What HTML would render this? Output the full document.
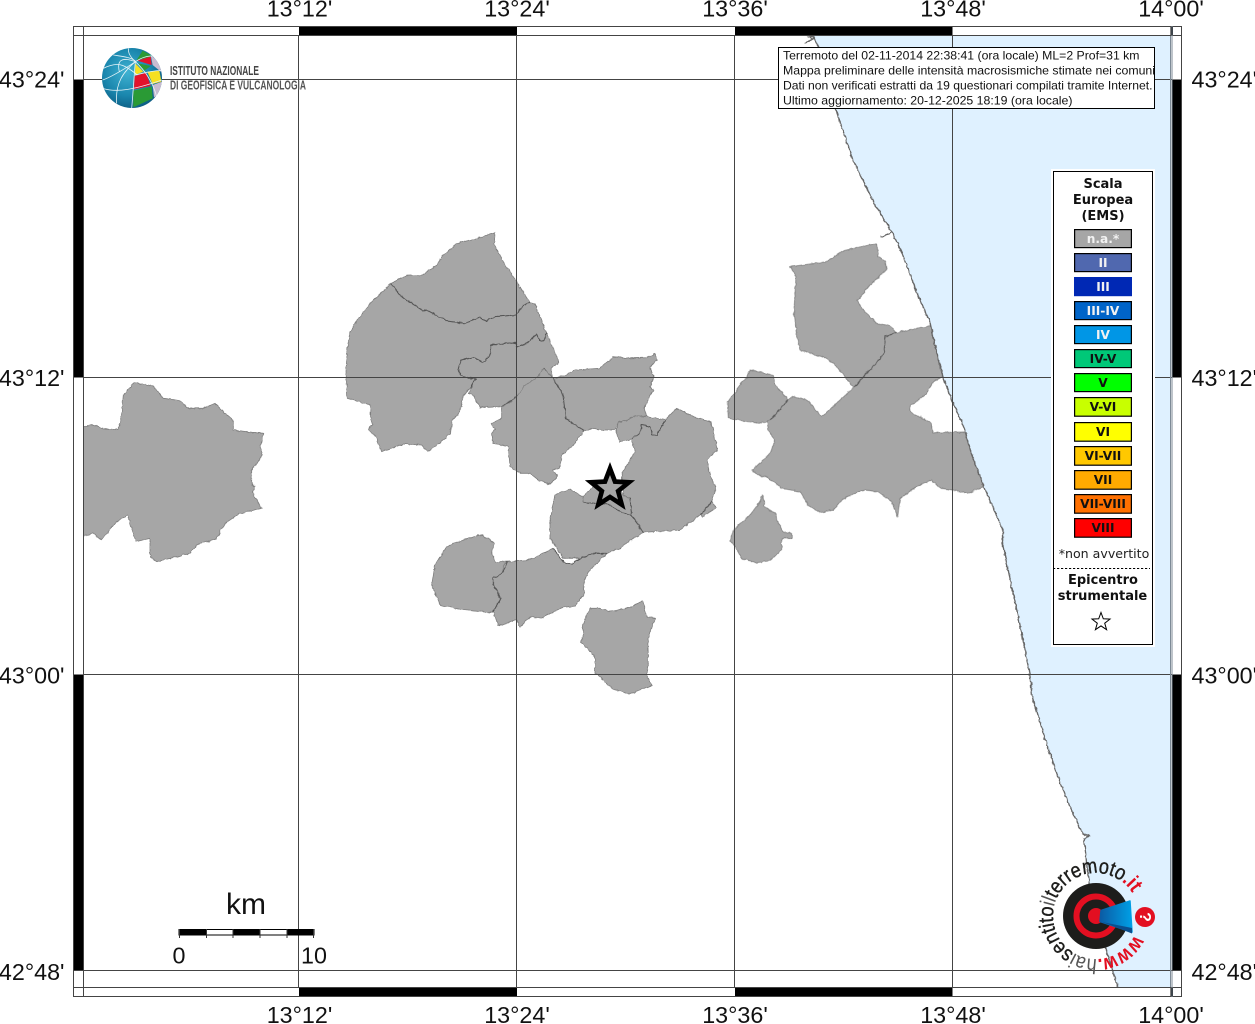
<!DOCTYPE html>
<html lang="it">
<head>
<meta charset="utf-8">
<title>Mappa intensità macrosismiche</title>
<style>
html,body{margin:0;padding:0;background:#fff;width:1255px;height:1024px;overflow:hidden}
svg{display:block;position:absolute;left:0;top:0}
.t{font-family:"Liberation Sans",sans-serif;font-size:23.3px;fill:#111}
.b{font-family:"Liberation Sans",sans-serif;font-size:12px;fill:#111}
.d{font-family:"DejaVu Sans",sans-serif;font-size:13px;font-weight:bold;fill:#111;text-anchor:middle}
.s{font-family:"DejaVu Sans",sans-serif;font-size:12.2px;font-weight:bold;text-anchor:middle}
.g polygon{fill:#a6a6a6;stroke:#7e7e7e;stroke-width:2.4;stroke-linejoin:round}
.g polyline{fill:none;stroke:#555;stroke-width:3;stroke-linejoin:round}
.grid line{stroke:#444;stroke-width:1}
</style>
</head>
<body>
<svg width="1255" height="1024" viewBox="0 0 1255 1024" xmlns="http://www.w3.org/2000/svg">
<defs>
<radialGradient id="gl" cx="42%" cy="40%" r="65%"><stop offset="0" stop-color="#3fb2d2"/><stop offset=".6" stop-color="#1a86ad"/><stop offset="1" stop-color="#0c5a80"/></radialGradient>
<linearGradient id="wd" x1="0" y1="0" x2="1" y2="0"><stop offset="0" stop-color="#0b5ba4"/><stop offset="1" stop-color="#00a0e6"/></linearGradient>
<clipPath id="gc"><circle cx="216" cy="234" r="90"/></clipPath>
<clipPath id="hc"><rect x="779" y="48" width="375.5" height="60"/></clipPath>
<clipPath id="fr"><rect x="83.5" y="36" width="1087.5" height="952"/></clipPath>
<filter id="rough" filterUnits="userSpaceOnUse" x="0" y="0" width="1255" height="1024">
<feTurbulence type="fractalNoise" baseFrequency=".22" numOctaves="2" seed="4" result="n"/>
<feDisplacementMap in="SourceGraphic" in2="n" scale="3" xChannelSelector="R" yChannelSelector="G"/>
<feGaussianBlur stdDeviation=".35"/>
</filter>
<path id="ring" d="M1134.6 934.9A43 43 0 1 1 1131.2 891.3A43 43 0 0 1 1134.6 934.9"/>
</defs>

<!-- sea -->
<polygon fill="#dff1ff" points="813,36 820,50 837,113 853,160 863,180 875,205 892,232 902,253 917,293 930,323 937,353 943,377 953,403 965,430 970,450 983,485 1003,530 1003,546 1017,611 1025,650 1030,676 1032,696 1047,745 1057,774 1070,807 1083,834 1089,836 1084,838 1088,876 1093,910 1107,953 1118,988 1171,988 1171,36"/>

<g clip-path="url(#fr)">
<g filter="url(#rough)">
<!-- municipalities -->
<g class="g" transform="translate(70,370) scale(.33333)">
<polygon points="-60,172 40,172 65,165 100,175 145,180 155,130 160,75 192,38 250,48 280,85 330,92 355,115 400,115 435,100 460,125 490,150 490,180 545,187 580,190 570,235 578,255 545,300 545,345 555,350 548,370 575,415 510,430 465,460 440,505 380,525 360,550 300,565 260,575 240,560 240,505 198,515 172,435 135,460 95,510 70,490 40,498 -60,498"/>
</g>
<g class="g" transform="translate(340,225) scale(.33333)">
<polygon points="152,175 120,208 92,235 70,260 45,295 30,320 22,370 18,440 22,520 92,540 90,575 98,600 84,612 110,640 125,680 190,657 245,660 262,680 300,655 330,625 335,590 360,560 370,510 390,490 408,460 385,458 360,450 355,430 365,405 400,397 430,412 452,385 452,360 525,352 532,367 560,355 590,328 600,348 612,345 620,325 610,300 585,235 570,232 550,240 528,270 465,275 440,288 420,278 376,295 320,288 260,255 250,258 200,225 180,210"/>
<polygon points="152,175 200,152 245,150 290,122 310,90 350,55 405,42 465,22 463,60 490,110 530,170 570,232 550,240 528,270 465,275 440,288 420,278 376,295 320,288 260,255 250,258 200,225 180,210"/>
<polygon points="385,458 360,450 355,430 365,405 400,397 430,412 452,385 452,360 525,352 532,367 560,355 590,328 600,348 612,345 620,325 638,365 657,412 635,428 635,458 612,430 605,450 565,475 530,515 485,545 420,548 395,505 385,505 408,460"/>
<polyline points="152,175 180,210 200,225 250,258 260,255 320,288 376,295 420,278 440,288 465,275 528,270 550,240 570,232"/>
<polyline points="408,460 385,458 360,450 355,430 365,405 400,397 430,412 452,385 452,360 525,352 532,367 560,355 590,328 600,348 612,345 620,325"/>
<polyline points="408,460 390,490"/>
<polyline points="485,545 530,515 565,475 605,450 612,430 635,458"/>
</g>
<g class="g" transform="translate(480,345) scale(.33333)">
<polygon points="222,100 250,92 285,75 360,70 400,35 445,40 500,38 525,25 530,45 510,68 522,98 510,125 522,135 510,150 493,190 500,215 462,212 440,228 415,232 405,255 370,255 340,250 312,258 258,220 248,145"/>
<polygon points="65,187 108,160 135,120 175,95 190,70 215,95 248,145 258,220 312,258 280,300 245,330 240,370 218,375 232,395 210,418 175,405 150,385 120,385 90,365 85,305 40,295 35,265 45,255 35,235 65,220"/>
<polygon points="500,215 555,225 530,270 515,268 510,245 485,240 478,265 455,283 420,290 408,265 415,232 440,228 462,212"/>
<polygon points="590,190 640,215 695,232 700,260 712,315 680,345 690,390 708,430 695,470 660,510 600,555 490,562 472,530 455,515 450,460 430,450 425,385 465,322 455,283 478,265 485,240 510,245 515,268 530,270 555,225"/>
<polygon points="660,510 695,470 710,488 668,515"/>
<polygon points="308,455 345,420 400,410 430,450 450,460 455,512 420,500 385,478 345,475 312,472"/>
<polygon points="210,520 225,450 268,432 308,455 312,472 345,475 385,478 420,500 455,512 490,562 445,590 420,610 380,625 300,640 250,640 210,580"/>
<polyline points="215,95 248,145 258,220 312,258"/>
<polyline points="455,283 478,265 485,240 510,245 515,268 530,270 555,225"/>
<polyline points="312,472 345,475 385,478 420,500 455,512 490,562"/>
<polyline points="450,460 455,512"/>
<polyline points="660,510 695,470"/>
</g>
<g class="g" transform="translate(420,520) scale(.33333)">
<polygon points="262,125 225,125 215,105 222,70 205,55 180,45 115,65 80,80 45,135 35,195 60,255 130,270 218,278 243,235 220,195 220,175 250,155"/>
<polygon points="250,135 262,125 325,120 400,85 430,125 455,135 465,122 520,100 560,100 510,150 493,180 490,225 465,258 430,262 360,295 330,290 300,320 290,300 235,318 222,280 218,275 243,235 222,200 220,175 250,155"/>
<polygon points="508,265 540,265 570,275 630,262 668,242 680,290 708,295 695,320 682,370 685,440 680,465 695,497 625,522 575,505 540,470 525,460 525,410 482,365 490,345 488,320"/>
<polyline points="262,125 250,155 220,175 220,195 243,235 218,278"/>
<polyline points="400,85 430,125 455,135 465,122 520,100 560,100"/>
</g>
<g class="g" transform="translate(720,230) scale(.33333)">
<polygon points="210,110 320,95 370,62 470,40 475,80 495,92 500,118 450,165 412,212 430,240 470,280 510,287 528,308 495,318 490,375 402,472 340,400 320,385 240,360 230,320 225,270 222,240 228,140"/>
<polygon points="530,308 620,290 632,285 640,320 668,440 640,455 620,490 570,530 572,548 630,575 640,608 735,606 750,660 792,768 745,790 700,780 660,775 635,750 590,770 540,805 533,860 515,815 475,785 435,780 400,790 360,815 340,840 300,848 265,825 240,785 185,775 140,740 125,740 95,722 150,670 165,635 145,600 142,575 205,508 220,498 262,510 305,560 402,472 490,375 495,318"/>
<polygon points="90,420 135,430 160,435 165,465 205,508 150,572 115,580 25,565 22,515 45,490 65,455 80,445"/>
<polygon points="127,793 135,830 168,852 170,870 190,905 215,910 215,925 185,925 185,960 150,992 110,998 65,985 40,940 28,935 40,900 90,855 120,815"/>
<polyline points="528,308 495,318 490,375 402,472"/>
<polyline points="205,508 150,572"/>
</g>
</g>
<!-- coast -->
<g filter="url(#rough)">
<polyline fill="none" stroke="#666" stroke-width="1.3" points="805,43 813,39 809,37 813,36 820,50 837,113 853,160 863,180 875,205 892,232 902,253 917,293 930,323 937,353 943,377 953,403 965,430 970,450 983,485 1003,530 1003,546 1017,611 1025,650 1030,676 1032,696 1047,745 1057,774 1070,807 1083,834 1089,836 1084,838 1088,876 1093,910 1107,953 1118,988"/>
<polyline fill="none" stroke="#666" stroke-width="1.3" points="881,237 888,234 892,232"/>
</g>
</g>

<!-- grid -->
<g class="grid">
<line x1="298.5" y1="36" x2="298.5" y2="988"/><line x1="516.5" y1="36" x2="516.5" y2="988"/><line x1="734.5" y1="36" x2="734.5" y2="988"/><line x1="952.5" y1="36" x2="952.5" y2="988"/>
<line x1="83" y1="79.5" x2="1172" y2="79.5"/><line x1="83" y1="377.5" x2="1172" y2="377.5"/><line x1="83" y1="674.5" x2="1172" y2="674.5"/><line x1="83" y1="970.5" x2="1172" y2="970.5"/>
<line x1="1170.5" y1="36" x2="1170.5" y2="988" style="stroke:#7d8a96"/>
</g>

<!-- frame bars -->
<g fill="#000">
<rect x="299" y="26" width="218" height="10"/><rect x="735" y="26" width="217.5" height="10"/><rect x="1170.5" y="26" width="2.5" height="10"/>
<rect x="299" y="987.5" width="218" height="9.5"/><rect x="735" y="987.5" width="217.5" height="9.5"/><rect x="1170.5" y="987.5" width="2.5" height="9.5"/>
<rect x="73" y="79.5" width="10.5" height="298"/><rect x="73" y="674.5" width="10.5" height="296"/>
<rect x="1172.5" y="79.5" width="9.5" height="298"/><rect x="1172.5" y="674.5" width="9.5" height="296"/>
</g>
<g fill="none" stroke="#444" stroke-width="1">
<rect x="73.5" y="26.5" width="1108" height="970"/>
<line x1="73" y1="35.5" x2="1182" y2="35.5"/><line x1="73" y1="987.5" x2="1182" y2="987.5"/>
<line x1="83.5" y1="26" x2="83.5" y2="997"/><line x1="1172" y1="26" x2="1172" y2="997" style="stroke:#7d8a96"/>
<line x1="73" y1="970.5" x2="83" y2="970.5"/><line x1="1172" y1="970.5" x2="1182" y2="970.5"/>
</g>

<!-- tick labels -->
<g class="t" text-anchor="middle">
<text x="299.5" y="16.5">13°12'</text><text x="517" y="16.5">13°24'</text><text x="735" y="16.5">13°36'</text><text x="953" y="16.5">13°48'</text><text x="1171" y="16.5">14°00'</text>
<text x="299.5" y="1023">13°12'</text><text x="517" y="1023">13°24'</text><text x="735" y="1023">13°36'</text><text x="953" y="1023">13°48'</text><text x="1171" y="1023">14°00'</text>
</g>
<g class="t" text-anchor="end">
<text x="64.5" y="87.5">43°24'</text><text x="64.5" y="386">43°12'</text><text x="64.5" y="683.5">43°00'</text><text x="64.5" y="980">42°48'</text>
</g>
<g class="t">
<text x="1191.5" y="87.5">43°24'</text><text x="1191.5" y="386">43°12'</text><text x="1191.5" y="683.5">43°00'</text><text x="1191.5" y="980">42°48'</text>
</g>

<!-- main star -->
<polygon points="610,468.5 615,481.6 629,482.3 618.1,491.1 621.8,504.7 610,497 598.2,504.7 601.9,491.1 591,482.3 605,481.6" fill="#a6a6a6" stroke="#000" stroke-width="4.6" stroke-miterlimit="10"/>

<!-- header box -->
<rect x="778.5" y="47.5" width="376" height="61" fill="#fff" stroke="#000"/>
<g class="b" clip-path="url(#hc)">
<text x="783" y="59.5" textLength="356.5" lengthAdjust="spacingAndGlyphs">Terremoto del 02-11-2014 22:38:41 (ora locale) ML=2 Prof=31 km</text>
<text x="783" y="74.5" textLength="372" lengthAdjust="spacingAndGlyphs">Mappa preliminare delle intensità macrosismiche stimate nei comuni</text>
<text x="783" y="89.5" textLength="369.5" lengthAdjust="spacingAndGlyphs">Dati non verificati estratti da 19 questionari compilati tramite Internet.</text>
<text x="783" y="104.5" textLength="289.5" lengthAdjust="spacingAndGlyphs">Ultimo aggiornamento: 20-12-2025 18:19 (ora locale)</text>
</g>

<!-- legend -->
<rect x="1051" y="169" width="104" height="478" fill="#fff"/>
<rect x="1053.5" y="171.5" width="99" height="473" fill="#fff" stroke="#000"/>
<text class="d" x="1103" y="188">Scala</text>
<text class="d" x="1103" y="204">Europea</text>
<text class="d" x="1103" y="220">(EMS)</text>
<g stroke="#000" stroke-width="1.2">
<rect x="1074.6" y="229.6" width="56.8" height="18" fill="#a6a6a6"/>
<rect x="1074.6" y="253.6" width="56.8" height="18" fill="#5068af"/>
<rect x="1074.6" y="277.6" width="56.8" height="18" fill="#0028b4" stroke="#0028b4"/>
<rect x="1074.6" y="301.6" width="56.8" height="18" fill="#0064c8"/>
<rect x="1074.6" y="325.6" width="56.8" height="18" fill="#0096e6"/>
<rect x="1074.6" y="349.6" width="56.8" height="18" fill="#00c878"/>
<rect x="1074.6" y="373.6" width="56.8" height="18" fill="#00ff00"/>
<rect x="1074.6" y="397.6" width="56.8" height="18.6" fill="#c8ff00"/>
<rect x="1074.6" y="422.6" width="56.8" height="18.6" fill="#ffff00"/>
<rect x="1074.6" y="446.6" width="56.8" height="18.6" fill="#ffc800"/>
<rect x="1074.6" y="470.6" width="56.8" height="18.6" fill="#ffaa00"/>
<rect x="1074.6" y="494.6" width="56.8" height="18.6" fill="#ff7000"/>
<rect x="1074.6" y="518.6" width="56.8" height="18.6" fill="#ff0000"/>
</g>
<g class="s" fill="#f2f2f2">
<text x="1103" y="243">n.a.*</text><text x="1103" y="267">II</text><text x="1103" y="291">III</text><text x="1103" y="315">III-IV</text><text x="1103" y="339">IV</text>
</g>
<g class="s" fill="#111">
<text x="1103" y="363">IV-V</text><text x="1103" y="387">V</text><text x="1103" y="411">V-VI</text><text x="1103" y="436">VI</text><text x="1103" y="460">VI-VII</text><text x="1103" y="484">VII</text><text x="1103" y="508">VII-VIII</text><text x="1103" y="532">VIII</text>
</g>
<text x="1104" y="558" text-anchor="middle" style="font-family:'DejaVu Sans',sans-serif;font-size:12.6px;fill:#222">*non avvertito</text>
<line x1="1053" y1="568.5" x2="1150" y2="568.5" stroke="#000" stroke-dasharray="2.2 1.8"/>
<text class="d" x="1103" y="584">Epicentro</text>
<text class="d" x="1102.5" y="600">strumentale</text>
<polygon points="1101,612.5 1103.3,618.8 1110,619.1 1104.7,623.2 1106.6,629.7 1101,625.9 1095.4,629.7 1097.3,623.2 1092,619.1 1098.7,618.8" fill="#fff" stroke="#000" stroke-width="1"/>

<!-- scale bar -->
<text x="246" y="914" text-anchor="middle" style="font-family:'Liberation Sans',sans-serif;font-size:30px;fill:#111">km</text>
<rect x="179" y="929.5" width="135" height="5.5" fill="#fff" stroke="#000" stroke-width="1"/>
<g fill="#000"><rect x="179" y="929.3" width="28" height="6"/><rect x="233" y="929.3" width="27" height="6"/><rect x="287" y="929.3" width="27" height="6"/></g>
<g stroke="#333" stroke-width="1"><line x1="179.5" y1="929" x2="179.5" y2="938"/><line x1="206.5" y1="929" x2="206.5" y2="938"/><line x1="233" y1="929" x2="233" y2="938"/><line x1="260" y1="929" x2="260" y2="938"/><line x1="287" y1="929" x2="287" y2="938"/><line x1="313.5" y1="929" x2="313.5" y2="938"/></g>
<text class="t" x="179" y="963.3" text-anchor="middle">0</text>
<text class="t" x="314" y="963.3" text-anchor="middle">10</text>

<!-- INGV logo -->
<g transform="translate(60,0) scale(.33333)">
<circle cx="216" cy="234" r="90" fill="url(#gl)"/>
<g clip-path="url(#gc)">
<polygon points="230,180 248,152 272,165 272,172" fill="#2a9a35"/>
<polygon points="232,182 272,170 275,195" fill="#e2122b"/>
<polygon points="272,165 295,185 306,218 278,195" fill="#c8bcd0"/>
<polygon points="226,190 250,215 225,225" fill="#f5e020"/>
<polygon points="235,190 272,198 252,213" fill="#2a9a35"/>
<polygon points="262,215 298,212 304,245 278,252" fill="#f5e020"/>
<polygon points="224,228 258,218 272,258 222,268" fill="#e2122b"/>
<polygon points="278,255 306,245 302,280 282,292" fill="#c8bcd0"/>
<polygon points="220,272 275,260 278,295 220,322" fill="#2a9a35"/>
<g fill="none" stroke="#e8f4f8" stroke-width="2.4">
<path d="M226 185C190 210 145 235 128 240"/>
<path d="M226 185C205 165 205 155 205 145"/>
<path d="M226 185C185 170 170 180 178 215"/>
<path d="M226 185C190 215 165 250 170 310"/>
<path d="M226 185C222 230 220 270 215 325"/>
<path d="M226 185C255 210 280 250 290 290"/>
<path d="M226 185C250 170 270 165 285 170"/>
<path d="M130 205C170 185 190 190 232 225"/>
<path d="M128 265C170 278 220 270 306 240"/>
<path d="M160 165C190 170 215 172 228 185"/>
<path d="M225 225C250 220 280 210 304 212"/>
</g>
</g>
<text x="330" y="225" textLength="267" lengthAdjust="spacingAndGlyphs" style="font-family:'Liberation Sans',sans-serif;font-size:39px;font-weight:bold;fill:#444">ISTITUTO NAZIONALE</text>
<text x="330" y="268" textLength="408" lengthAdjust="spacingAndGlyphs" style="font-family:'Liberation Sans',sans-serif;font-size:39px;font-weight:bold;fill:#555">DI GEOFISICA E VULCANOLOGIA</text>
</g>

<!-- haisentito logo -->
<circle cx="1096" cy="916" r="33" fill="#1d1d1b"/>
<circle cx="1096" cy="916" r="19.5" fill="none" stroke="#e30f21" stroke-width="6" stroke-dasharray="105.5 17" stroke-dashoffset="-8.5"/>
<circle cx="1096" cy="916" r="8" fill="#e30f21"/>
<polygon points="1101,910.5 1130,901 1132,932 1100,921.5" fill="url(#wd)" stroke="url(#wd)" stroke-width="1.5" stroke-linejoin="round"/>
<polygon points="1102,922 1132,928 1132,933.5" fill="#0a4f8f"/>
<circle cx="1145" cy="917" r="10" fill="#e30f21"/>
<text transform="translate(1140,917) rotate(90)" text-anchor="middle" y="0" style="font-family:'Liberation Sans',sans-serif;font-size:16px;font-weight:bold;fill:#fff">?</text>
<text style="font-family:'Liberation Sans',sans-serif;font-size:21px;fill:#1d1d1b"><textPath href="#ring" textLength="226" lengthAdjust="spacingAndGlyphs"><tspan fill="#e30f21" font-weight="bold">www.</tspan><tspan fill="#555">hai</tspan><tspan stroke="#1d1d1b" stroke-width=".4">sentito</tspan><tspan fill="#555">il</tspan><tspan stroke="#1d1d1b" stroke-width=".4">terremoto</tspan><tspan fill="#e30f21" font-weight="bold">.it</tspan></textPath></text>
</svg>
</body>
</html>
